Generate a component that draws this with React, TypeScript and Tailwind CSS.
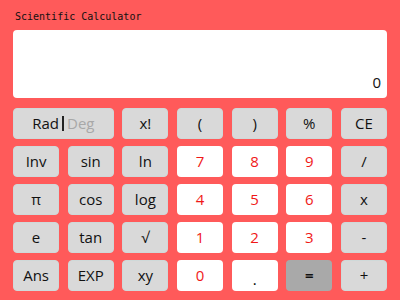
import React from "react"

type Key = { label: string; kind?: "num" | "eq"; span?: number }

const rows: Key[][] = [
    [{ label: "Rad|Deg", span: 2 }, { label: "x!" }, { label: "(" }, { label: ")" }, { label: "%" }, { label: "CE" }],
    [{ label: "Inv" }, { label: "sin" }, { label: "ln" }, { label: "7", kind: "num" }, { label: "8", kind: "num" }, { label: "9", kind: "num" }, { label: "/" }],
    [{ label: "π" }, { label: "cos" }, { label: "log" }, { label: "4", kind: "num" }, { label: "5", kind: "num" }, { label: "6", kind: "num" }, { label: "x" }],
    [{ label: "e" }, { label: "tan" }, { label: "√" }, { label: "1", kind: "num" }, { label: "2", kind: "num" }, { label: "3", kind: "num" }, { label: "-" }],
    [{ label: "Ans" }, { label: "EXP" }, { label: "xy" }, { label: "0", kind: "num" }, { label: ".", kind: "num" }, { label: "=", kind: "eq" }, { label: "+" }],
]

const CalcButton = ({ k }: { k: Key }) => {
    const base = "h-[31px] rounded-[4px] flex items-center justify-center text-[15px]"

    if (k.span === 2) {
        return (
            <button className={`${base} col-span-2 bg-[#d9d9d9] border border-[#cfd9d9] text-[#111]`}>
                <span>Rad</span>
                <span className="mx-[3px] inline-block w-[2px] h-[15px] bg-[#222]" />
                <span className="text-[#a8a8a8]">Deg</span>
            </button>
        )
    }

    if (k.kind === "num") {
        return (
            <button className={`${base} bg-white ${k.label === "." ? "text-black pt-[8px]" : "text-[#f01818]"}`}>
                {k.label}
            </button>
        )
    }

    if (k.kind === "eq") {
        return <button className={`${base} bg-[#a9a9a9] text-[#111] font-bold text-[13px]`}>{k.label}</button>
    }

    return <button className={`${base} bg-[#d9d9d9] border border-[#cfd9d9] text-[#111]`}>{k.label}</button>
}

export default function App() {
    return (
        <div className="w-[400px] h-[300px] bg-[#ff5a5a] px-[13px] pt-[10px] overflow-hidden" style={{ fontFamily: '"Open Sans", "Noto Sans", sans-serif' }}>
            <p className="text-[10px] leading-[14px] text-[#111] pl-[2px]" style={{ fontFamily: '"DejaVu Sans Mono", monospace' }}>
                Scientific Calculator
            </p>
            <div className="mt-[6px] h-[68px] bg-white rounded-[4px] flex items-end justify-end pr-[6px] pb-[5px]">
                <span className="text-[15px] text-[#111]">0</span>
            </div>
            <div className="mt-[10px] grid grid-cols-7 gap-x-[8.5px] gap-y-[7px]">
                {rows.flat().map((k, i) => (
                    <CalcButton key={i} k={k} />
                ))}
            </div>
        </div>
    )
}
